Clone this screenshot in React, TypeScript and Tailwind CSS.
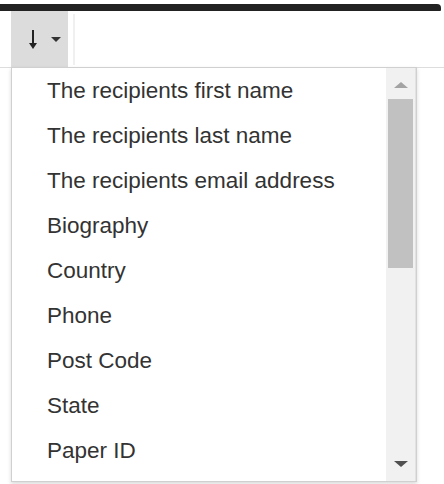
import React from "react";

const items = [
  "The recipients first name",
  "The recipients last name",
  "The recipients email address",
  "Biography",
  "Country",
  "Phone",
  "Post Code",
  "State",
  "Paper ID",
];

export default function App() {
  return (
    <div
      className="relative w-[444px] h-[484px] bg-white overflow-hidden"
      style={{ fontFamily: '"Liberation Sans", Arial, sans-serif' }}
    >
      <div className="h-[4px]" />
      <div className="h-[7px] mr-[3px] bg-[#222222] rounded-tr-[4px] rounded-br-[1px]" />
      <div className="flex h-[57px] border-b border-[#dddddd]">
        <div className="ml-[11px] w-[57px] bg-[#dcdcdc] flex items-center pl-[17px] gap-[13px]">
          <svg width="10" height="20" viewBox="0 0 10 20" className="mt-[1px]">
            <path d="M5 0 V17" stroke="#222" strokeWidth="2" fill="none" />
            <path d="M1 13 L5 19 L9 13 Z" fill="#222" />
          </svg>
          <span className="w-0 h-0 border-l-[5px] border-r-[5px] border-t-[5px] border-l-transparent border-r-transparent border-t-[#333]" />
        </div>
        <div className="ml-[5px] mt-[3px] mb-[2px] w-[2px] bg-[#f0f0f0]" />
      </div>

      <div className="absolute left-[11px] top-[67px] w-[406px] h-[415px] bg-white border border-[#d0d0d0] shadow-[0_2px_4px_rgba(0,0,0,0.15)] flex">
        <div className="flex-1 overflow-hidden">
          {items.map((t) => (
            <div
              key={t}
              className="h-[45px] flex items-center pl-[35px] text-[22.5px] text-[#333333]"
            >
              {t}
            </div>
          ))}
        </div>
        <div className="w-[30px] bg-[#f1f1f1] flex flex-col items-center border-r border-[#e2e2e2]">
          <div className="h-[31px] w-full flex items-center justify-center">
            <span className="mt-[2px] w-0 h-0 border-l-[7px] border-r-[7px] border-b-[6px] border-l-transparent border-r-transparent border-b-[#a3a3a3]" />
          </div>
          <div className="w-[25px] h-[169px] bg-[#c1c1c1]" />
          <div className="flex-1" />
          <div className="h-[31px] w-full flex items-center justify-center">
            <span className="-mt-[4px] w-0 h-0 border-l-[7px] border-r-[7px] border-t-[6px] border-l-transparent border-r-transparent border-t-[#505050]" />
          </div>
        </div>
      </div>
    </div>
  );
}
